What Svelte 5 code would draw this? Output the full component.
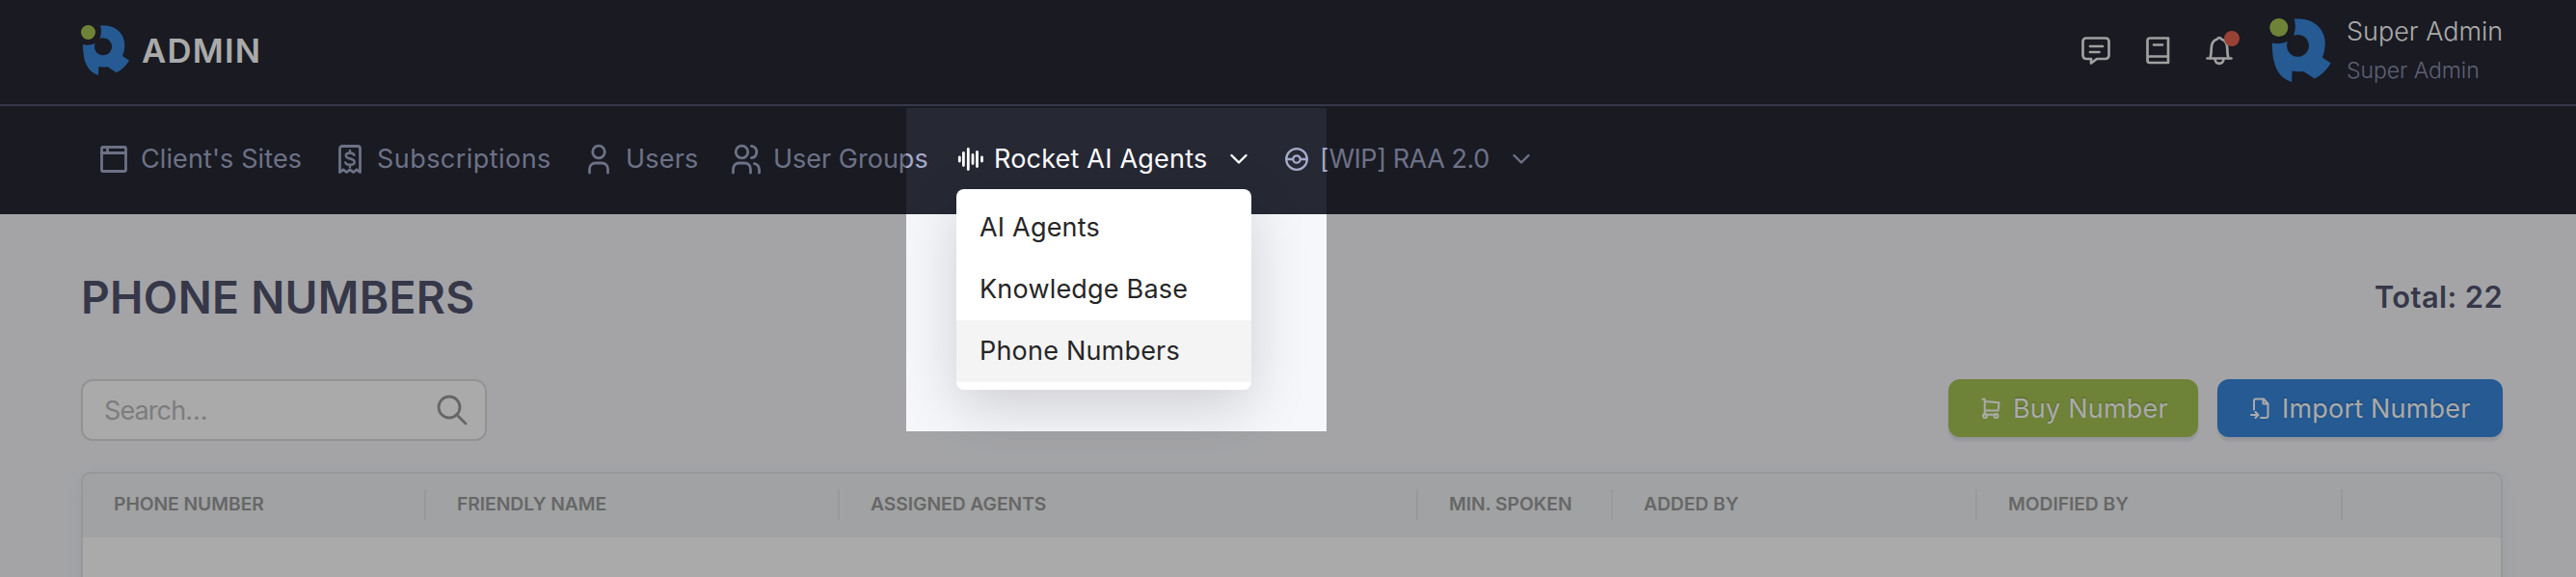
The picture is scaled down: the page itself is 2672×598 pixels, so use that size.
<script lang="ts">
  type NavItem = { label: string; icon: string; active?: boolean; menu?: boolean };

  const nav: NavItem[] = [
    { label: "Client's Sites", icon: 'window' },
    { label: 'Subscriptions', icon: 'receipt' },
    { label: 'Users', icon: 'user' },
    { label: 'User Groups', icon: 'users' },
    { label: 'Rocket AI Agents', icon: 'wave', active: true, menu: true },
    { label: '[WIP] RAA 2.0', icon: 'ball', menu: true },
  ];

  const submenu = ['AI Agents', 'Knowledge Base', 'Phone Numbers'];
  let hovered = $state('Phone Numbers');

  const columns = [
    'Phone Number', 'Friendly Name', 'Assigned Agents',
    'Min. Spoken', 'Added By', 'Modified By', '',
  ];
</script>

{#snippet logo()}
  <svg class="logo" viewBox="0 0 150 156" aria-hidden="true">
    <circle cx="22.500" cy="22.500" r="22.500" fill="#a7c553" />
    <path fill="#3887dd" d="M60 2C105-4 136 25 136 62Q136 80 129 96L150 110Q134 136 110 148L83 130Q70 132 55 129L54 156C20 144 6 115 6 60Q26 65 44 57A27 27 0 1 0 59 42Q66 20 60 2Z" />
  </svg>
{/snippet}

{#snippet icon(name: string)}
  <svg class="icon" viewBox="0 0 32 32" aria-hidden="true">
    {#if name === 'window'}
      <rect x="3.500" y="3.500" width="25" height="25" rx="1.500" />
      <path d="M3.500 9.500h25M9.500 3.500v6" />
    {:else if name === 'receipt'}
      <path d="M5.500 29.500V5a2.500 2.500 0 0 1 2.500-2.500h16a2.500 2.500 0 0 1 2.500 2.500v24.500l-3.500-2.700-3.500 2.700-3.500-2.700-3.500 2.700-3.500-2.700z" />
      <path stroke-width="2.400" d="M20.500 11.800c-.7-1.500-2.200-2.300-4.500-2.300-2.600 0-4.200 1-4.200 2.800 0 4.400 8.900 2 8.900 6.400 0 2-1.800 3.100-4.700 3.100-2.600 0-4.200-.8-4.800-2.400M16 7v2.500M16 21.800v2.500" />
    {:else if name === 'user'}
      <circle cx="16" cy="8.500" r="6.300" />
      <path d="M6.500 30v-3.500c0-4 2.500-6.500 6.500-6.500h6c4 0 6.500 2.500 6.500 6.500V30" />
    {:else if name === 'users'}
      <circle cx="11.500" cy="8.500" r="6.300" />
      <path d="M2.500 30v-3.500c0-4 2.500-6.500 6.200-6.500h5.600c3.700 0 6.200 2.500 6.200 6.500V30M21.500 2.300c3.500.6 5.300 2.900 5.300 6.200s-2 5.600-5.300 6.200M24.500 20.500c3 .8 5 3 5 6.500v3" />
    {:else if name === 'wave'}
      <path d="M4.300 14v4M8.400 9.500v13M13.300 5.500v21M18 11.500v9M22.500 8.500v15M27.500 14v4" />
    {:else if name === 'ball'}
      <circle cx="16" cy="16" r="10.800" />
      <circle cx="16" cy="16" r="3.700" />
      <path d="M5.500 16h6.500M20 16h6.500" />
    {/if}
  </svg>
{/snippet}

{#snippet chevron()}
  <svg class="chevron" viewBox="0 0 18 12" aria-hidden="true"><path d="M1.500 2 9 9.500 16.500 2" /></svg>
{/snippet}

<div class="page">
  <header>
    <div class="topbar">
      <div class="brand">
        {@render logo()}
        <span>ADMIN</span>
      </div>
      <div class="tools">
        <svg class="tool" viewBox="0 0 32 32" aria-label="Messages">
          <path d="M6 3.500h20a3.500 3.500 0 0 1 3.500 3.500v14.500a3.500 3.500 0 0 1-3.500 3.500h-9l-6 4.500V25H6A3.500 3.500 0 0 1 2.500 21.500V7A3.500 3.500 0 0 1 6 3.500zM10 12h13M10 18h9.500" />
        </svg>
        <svg class="tool" viewBox="0 0 32 32" aria-label="Docs">
          <path d="M27 29H8a2.500 2.500 0 0 1-2.500-2.500V6A2.500 2.500 0 0 1 8 3.500h19zM5.500 25a2.500 2.500 0 0 1 2.500-2.500h19M12 10.500h9" />
        </svg>
        <div class="bell">
          <svg class="tool" viewBox="0 0 32 32" aria-label="Notifications">
            <path d="M3.500 24.500h25M6.500 24.500c1-3 1.200-6.500 1.200-10C7.700 9 10.500 5.500 14 4.500 14.500 2.500 17.500 2.500 18 4.500c3.500 1 6.300 4.500 6.300 10 0 3.500.2 7 1.200 10M11.500 25c0 2.800 2 4.800 4.500 4.800s4.500-2 4.500-4.800" />
          </svg>
          <i></i>
        </div>
        <div class="profile">
          {@render logo()}
          <div class="who">
            <b>Super Admin</b>
            <small>Super Admin</small>
          </div>
        </div>
      </div>
    </div>

    <nav>
      {#each nav as item}
        <div class="nav-item nav-{item.icon}" class:active={item.active} class:has-menu={item.menu}>
          {@render icon(item.icon)}
          <span>{item.label}</span>
          {#if item.menu}{@render chevron()}{/if}
          {#if item.active}
            <ul class="dropdown">
              {#each submenu as entry}
                <li class:hovered={hovered === entry} onmouseenter={() => (hovered = entry)}>{entry}</li>
              {/each}
            </ul>
          {/if}
        </div>
      {/each}
    </nav>
  </header>

  <main>
    <div class="heading">
      <h1>PHONE NUMBERS</h1>
      <strong>Total: 22</strong>
    </div>

    <div class="actions">
      <label class="search">
        <input type="text" placeholder="Search…" />
        <svg viewBox="0 0 32 32" aria-hidden="true"><circle cx="13" cy="13" r="11" /><path d="m20.500 20.500 9.500 9.500" /></svg>
      </label>
      <div class="buttons">
        <button class="btn btn-buy">
          <svg viewBox="0 0 22 24" aria-hidden="true">
            <path d="M2.500 2.800h2.200V18.500M4.700 5l14.800 1.200-.8 8.300H5M5 18.800h11.500" /><circle cx="5" cy="20" r="2" /><circle cx="16.500" cy="20" r="2" />
          </svg>
          <span>Buy Number</span>
        </button>
        <button class="btn btn-import">
          <svg viewBox="0 0 22 24" aria-hidden="true">
            <path d="M5 13.500V4.500a2 2 0 0 1 2-2h8l4.500 5v12.500a2 2 0 0 1-2 2h-5.500M14.500 3v4.500H19M2 19h7M6.500 16l3 3-3 3" />
          </svg>
          <span>Import Number</span>
        </button>
      </div>
    </div>

    <div class="table">
      <div class="thead">
        {#each columns as column}
          <div class="th"><span>{column}</span></div>
        {/each}
      </div>
    </div>
  </main>

  <div class="spotlight"></div>
</div>

<style>
  :global(body) { margin: 0; overflow: hidden; }
  .page {
    position: relative;
    height: 598px; overflow: hidden;
    background: #f6f7fb;
    font-family: Inter, "Liberation Sans", sans-serif;
    font-size: 27px;
    letter-spacing: 0.2px;
  }
  .page * { box-sizing: border-box; }
  svg { display: block; flex: none; fill: none; stroke-linecap: round; stroke-linejoin: round; }

  header { background: #262834; }
  .topbar {
    display: flex; justify-content: space-between;
    height: 110px; padding: 0 76px 0 84px;
    border-bottom: 2px solid #51546e;
  }
  .brand { display: flex; align-items: center; height: 104px; gap: 13px; }
  .brand .logo { width: 50px; height: 52px; }
  .brand span { color: #fff; font-size: 34.7px; font-weight: 600; letter-spacing: 1.2px; }

  .tools { display: flex; height: 104px; align-items: center; gap: 32px; }
  .tool { width: 32px; height: 32px; stroke: #f0f0f0; stroke-width: 2.7; }
  .bell { position: relative; }
  .bell i {
    position: absolute; top: -4px; right: -5px;
    width: 16px; height: 16px; border-radius: 50%;
    background: #e46350;
  }
  .profile { display: flex; align-items: center; gap: 16px; width: 242px; margin-left: 4px; }
  .profile .logo { width: 64px; height: 66px; }
  .who { display: flex; flex-direction: column; padding-top: 2px; white-space: nowrap; }
  .who b { font-weight: 300; line-height: 40px; letter-spacing: 0; color: #fff; }
  .who small { font-size: 23.1px; font-weight: 300; line-height: 41px; letter-spacing: -0.1px; color: #8e90ae; }

  nav {
    display: grid; grid-template-columns: 245px 258px 153px 233px 338px 280px;
    height: 112px; padding: 0 102px;
  }
  .nav-item {
    position: relative;
    display: flex; align-items: center; gap: 12px;
    height: 109px; color: #a4aac9; white-space: nowrap;
  }
  .nav-item.active { color: #fff; }
  .nav-item.has-menu { gap: 8px; }
  .nav-window { letter-spacing: 0.1px; }
  .nav-receipt { letter-spacing: 0.45px; }
  .nav-users { letter-spacing: 0; }
  .nav-ball { letter-spacing: -0.45px; }
  .icon { width: 32px; height: 32px; stroke: currentColor; stroke-width: 2.8; }
  .nav-ball .icon { stroke-width: 2.3; }
  .chevron { width: 18px; height: 12px; margin-left: 16px; stroke: currentColor; stroke-width: 2.4; }

  .dropdown {
    position: absolute; top: 86px; left: 1px;
    width: 306px; margin: 0; padding: 8px 0;
    list-style: none;
    background: #fff; border-radius: 8px;
    box-shadow: 0 18px 60px rgba(0, 0, 0, 0.16);
    color: #262626;
  }
  .dropdown li { height: 64px; padding: 0 24px; line-height: 63px; }
  .dropdown li.hovered { background: #f4f4f4; }

  main { padding: 0 76px 0 84px; }
  .heading {
    display: flex; align-items: center; justify-content: space-between;
    height: 171px; color: #51546e;
  }
  h1 { margin: 0; font-size: 46.2px; font-weight: 600; letter-spacing: 0.3px; }
  .heading strong { font-size: 30.8px; font-weight: 600; letter-spacing: 0.4px; }

  .actions { display: flex; justify-content: space-between; align-items: flex-start; height: 96px; }
  .search {
    display: flex; align-items: center;
    width: 421px; height: 64px; padding: 0 18px 0 22px;
    background: #fff; border: 2px solid #dcdcdc; border-radius: 12px;
  }
  .search input {
    flex: 1; min-width: 0; padding: 0;
    border: 0; outline: 0; background: none;
    font: inherit; letter-spacing: -0.9px;
  }
  .search input::placeholder { color: #bcbcbc; opacity: 1; }
  .search svg { width: 32px; height: 32px; stroke: #9a9a9a; stroke-width: 2.8; }
  .buttons { display: flex; gap: 20px; }
  .btn {
    display: flex; align-items: center; gap: 12px;
    height: 60px; padding: 0 0 0 33px;
    border: 0; border-radius: 12px;
    color: #fff; font: inherit; letter-spacing: inherit; white-space: nowrap;
    text-shadow: 0 -1px 2px rgba(0, 0, 0, 0.25);
    box-shadow: 0 4px 3px rgba(60, 70, 100, 0.13);
  }
  .btn svg { width: 22px; height: 24px; stroke: #fff; stroke-width: 2; }
  .btn-buy { width: 259px; background: #a6c554; }
  .btn-import { width: 296px; background: #3887dd; }

  .table {
    height: 200px; overflow: hidden;
    background: #fff;
    border: 2px solid #e1e4e6; border-radius: 10px;
    box-shadow: 0 4px 20px rgba(80, 100, 120, 0.08);
  }
  .thead {
    display: grid; grid-template-columns: 356px 429px 600px 202px 378px 379px 1fr;
    height: 66px; background: #f1f4f5;
  }
  .th {
    height: 32px; margin-top: 16px; padding-left: 32px;
    border-right: 2px solid #e4e7e9;
    color: #9b9b9b; font-size: 19.3px; font-weight: 600;
    line-height: 30px; letter-spacing: -0.05px; text-transform: uppercase; white-space: nowrap;
  }
  .th:last-child { border-right: 0; }

  /* everything outside the highlighted area is dimmed by the spread shadow */
  .spotlight {
    position: absolute; left: 940px; top: 112px;
    width: 436px; height: 335px;
    box-shadow: 0 0 0 3000px rgba(0, 0, 0, 0.333);
    pointer-events: none;
  }
</style>
